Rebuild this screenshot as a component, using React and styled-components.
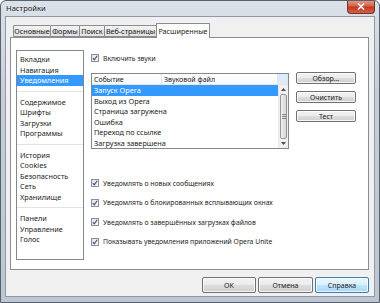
import React from 'react';
import styled, { createGlobalStyle } from 'styled-components';

const Global = createGlobalStyle`
  html, body { margin: 0; padding: 0; background: #fff; }
  body { font-family: "Noto Sans", "Open Sans", sans-serif; color: #1c1c1c; }
  * { box-sizing: border-box; }
`;

const Window = styled.div`
  width: 380px;
  height: 303px;
  display: flex;
  flex-direction: column;
  background: linear-gradient(180deg, #dbe1e8 0%, #c6cfd9 30%, #bcc6d0 100%);
  border: 1px solid #58626e;
  border-radius: 6px 6px 0 0;
  padding: 0 4px 5px 4px;
  overflow: hidden;
`;

const TitleBar = styled.div`
  height: 15px;
  display: flex;
  justify-content: space-between;
  align-items: flex-start;
`;

const Title = styled.div`
  font-size: 7.6px;
  line-height: 15px;
  padding-left: 1px;
  color: #1a1a1a;
  text-shadow: 0 0 4px rgba(255, 255, 255, 0.9);
`;

const CloseBtn = styled.div`
  width: 28px;
  height: 14px;
  margin-top: -1px;
  border: 1px solid #71342a;
  border-top: none;
  border-radius: 0 0 4px 4px;
  background: linear-gradient(180deg, #e9a190 0%, #d5634b 45%, #c5391f 55%, #d2604a 100%);
  display: flex;
  align-items: center;
  justify-content: center;
`;

const Client = styled.div`
  flex: 1;
  display: flex;
  flex-direction: column;
  background: #f0f0f0;
  border: 1px solid #8e99a5;
  padding: 6px 5px 3px 4px;
`;

const TabRow = styled.div`
  height: 14px;
  display: flex;
  align-items: flex-end;
  padding-left: 3px;
  position: relative;
  z-index: 1;
`;

const Tab = styled.div`
  width: ${p => p.$w}px;
  height: ${p => (p.$active ? 15 : 12)}px;
  margin-bottom: ${p => (p.$active ? -1 : 0)}px;
  margin-left: ${p => (p.$first ? 0 : -1)}px;
  border: 1px solid #898c95;
  border-bottom: ${p => (p.$active ? 'none' : '1px solid #898c95')};
  border-radius: 1px 1px 0 0;
  background: ${p => (p.$active ? '#ffffff' : 'linear-gradient(180deg, #f3f3f3 0%, #ebebeb 50%, #dedede 51%, #e6e6e6 100%)')};
  font-size: 7.2px;
  line-height: 10px;
  padding-top: ${p => (p.$active ? 2 : 0)}px;
  text-align: center;
  white-space: nowrap;
  position: relative;
  z-index: ${p => (p.$active ? 2 : 0)};
`;

const Panel = styled.div`
  flex: 1;
  background: #fff;
  border: 1px solid #898c95;
  display: flex;
  padding: 12px 0 0 5px;
`;

const Sidebar = styled.div`
  width: 68px;
  height: 210px;
  border: 1px solid #828790;
  background: #fff;
  padding-top: 3px;
  display: flex;
  flex-direction: column;
`;

const SideItem = styled.div`
  height: 10.5px;
  line-height: 10.5px;
  font-size: 7.3px;
  padding-left: 3px;
  white-space: nowrap;
  background: ${p => (p.$sel ? '#3399ff' : 'transparent')};
  color: ${p => (p.$sel ? '#fff' : '#1c1c1c')};
`;

const SideSep = styled.div`
  height: 11px;
  display: flex;
  align-items: center;
  &::after {
    content: '';
    flex: 1;
    height: 1px;
    background: #e3e3e3;
  }
`;

const Content = styled.div`
  margin-left: 7px;
  display: flex;
  flex-direction: column;
`;

const CheckRow = styled.div`
  height: 10px;
  display: flex;
  align-items: center;
  font-size: 6.8px;
  white-space: nowrap;
  margin-top: ${p => p.$mt || 0}px;
`;

const Box = styled.span`
  width: 8px;
  height: 8px;
  border: 1px solid #8f8f8f;
  background: linear-gradient(135deg, #e0e3ea 0%, #f6f7f9 100%);
  margin-right: 4px;
  display: flex;
  align-items: center;
  justify-content: center;
  flex: none;
`;

const SoundArea = styled.div`
  margin-top: 10px;
  display: flex;
  align-items: flex-start;
`;

const Table = styled.div`
  width: 198px;
  height: 76px;
  border: 1px solid #828790;
  display: flex;
  flex-direction: column;
  background: #fff;
`;

const Header = styled.div`
  height: 11px;
  display: flex;
  font-size: 7px;
  line-height: 11px;
  border-bottom: 1px solid #e5e5e5;
`;

const HeadCell = styled.div`
  width: ${p => (p.$w ? `${p.$w}px` : 'auto')};
  flex: ${p => (p.$w ? 'none' : 1)};
  padding-left: 2px;
  border-right: 1px solid #e5e5e5;
  white-space: nowrap;
  background: ${p => (p.$blue ? '#dcebf8' : 'linear-gradient(180deg, #fff 0%, #f7f8fa 100%)')};
`;

const TableBody = styled.div`
  flex: 1;
  display: flex;
`;

const Rows = styled.div`
  flex: 1;
  display: flex;
  flex-direction: column;
`;

const Row = styled.div`
  height: 10.5px;
  line-height: 10.5px;
  font-size: 7.3px;
  padding-left: 2px;
  white-space: nowrap;
  background: ${p => (p.$sel ? '#3399ff' : 'transparent')};
  color: ${p => (p.$sel ? '#fff' : '#1c1c1c')};
`;

const ScrollBar = styled.div`
  width: 10px;
  display: flex;
  flex-direction: column;
  background: #f0f0f0;
  border-left: 1px solid #e8e8e8;
`;

const ScrollArrow = styled.div`
  height: 9px;
  display: flex;
  align-items: center;
  justify-content: center;
`;

const Thumb = styled.div`
  flex: 1;
  margin: 0 1px;
  border: 1px solid #979797;
  border-radius: 2px;
  background: linear-gradient(90deg, #f2f2f2 0%, #e2e2e2 50%, #d6d6d6 100%);
  display: flex;
  align-items: center;
  justify-content: center;
`;

const SideButtons = styled.div`
  margin-left: 7px;
  margin-top: -1px;
  display: flex;
  flex-direction: column;
  gap: 7px;
`;

const Button = styled.div`
  width: ${p => p.$w}px;
  height: ${p => p.$h}px;
  border: 1px solid ${p => (p.$def ? '#3c7fb1' : '#707070')};
  border-radius: 2px;
  background: ${p => (p.$def
    ? 'linear-gradient(180deg, #eaf6fd 0%, #d9f0fc 50%, #bee6fd 51%, #a7d9f5 100%)'
    : 'linear-gradient(180deg, #f2f2f2 0%, #ebebeb 50%, #dddddd 51%, #cfcfcf 100%)')};
  box-shadow: inset 0 0 0 1px rgba(255, 255, 255, 0.75);
  font-size: 7px;
  display: flex;
  align-items: center;
  justify-content: center;
  white-space: nowrap;
`;

const NotifyList = styled.div`
  margin-top: 29px;
  display: flex;
  flex-direction: column;
  gap: 9.5px;
`;

const BottomBar = styled.div`
  margin-top: 7px;
  display: flex;
  justify-content: flex-end;
  gap: 2px;
`;

const Check = () => (
  <svg width="6" height="6" viewBox="0 0 6 6">
    <path d="M0.8 3.2 L2.3 4.8 L5.2 0.8" fill="none" stroke="#3a4f7a" strokeWidth="1.1" />
  </svg>
);

const CheckItem = ({ children, mt }) => (
  <CheckRow $mt={mt}>
    <Box><Check /></Box>
    {children}
  </CheckRow>
);

const sideGroups = [
  ['Вкладки', 'Навигация', 'Уведомления'],
  ['Содержимое', 'Шрифты', 'Загрузки', 'Программы'],
  ['История', 'Cookies', 'Безопасность', 'Сеть', 'Хранилище'],
  ['Панели', 'Управление', 'Голос'],
];

const tabs = [
  ['Основные', 38],
  ['Формы', 30],
  ['Поиск', 26],
  ['Веб-страницы', 53],
  ['Расширенные', 54],
];

const events = [
  'Запуск Opera',
  'Выход из Opera',
  'Страница загружена',
  'Ошибка',
  'Переход по ссылке',
  'Загрузка завершена',
];

export default function App() {
  return (
    <>
      <Global />
      <Window>
        <TitleBar>
          <Title>Настройки</Title>
          <CloseBtn>
            <svg width="8" height="7" viewBox="0 0 8 7">
              <path d="M1 0.5 L7 6.5 M7 0.5 L1 6.5" stroke="#fff" strokeWidth="1.6" />
            </svg>
          </CloseBtn>
        </TitleBar>
        <Client>
          <TabRow>
            {tabs.map(([t, w], i) => (
              <Tab key={t} $w={w} $first={i === 0} $active={i === 4}>{t}</Tab>
            ))}
          </TabRow>
          <Panel>
            <Sidebar>
              {sideGroups.map((g, gi) => (
                <React.Fragment key={gi}>
                  {gi > 0 && <SideSep />}
                  {g.map(item => (
                    <SideItem key={item} $sel={item === 'Уведомления'}>{item}</SideItem>
                  ))}
                </React.Fragment>
              ))}
            </Sidebar>
            <Content>
              <CheckItem mt={3}>Включить звуки</CheckItem>
              <SoundArea>
                <Table>
                  <Header>
                    <HeadCell $w={70}>Событие</HeadCell>
                    <HeadCell>Звуковой файл</HeadCell>
                    <HeadCell $w={10} $blue />
                  </Header>
                  <TableBody>
                    <Rows>
                      {events.map((e, i) => (
                        <Row key={e} $sel={i === 0}>{e}</Row>
                      ))}
                    </Rows>
                    <ScrollBar>
                      <ScrollArrow>
                        <svg width="5" height="3" viewBox="0 0 5 3"><path d="M0 3 L2.5 0 L5 3 Z" fill="#4d4d4d" /></svg>
                      </ScrollArrow>
                      <Thumb>
                        <svg width="4" height="5" viewBox="0 0 4 5">
                          <path d="M0 0.5 H4 M0 2.5 H4 M0 4.5 H4" stroke="#6b6b6b" strokeWidth="0.8" />
                        </svg>
                      </Thumb>
                      <ScrollArrow>
                        <svg width="5" height="3" viewBox="0 0 5 3"><path d="M0 0 L2.5 3 L5 0 Z" fill="#4d4d4d" /></svg>
                      </ScrollArrow>
                    </ScrollBar>
                  </TableBody>
                </Table>
                <SideButtons>
                  <Button $w={60} $h={12}>Обзор...</Button>
                  <Button $w={60} $h={12}>Очистить</Button>
                  <Button $w={60} $h={12}>Тест</Button>
                </SideButtons>
              </SoundArea>
              <NotifyList>
                <CheckItem>Уведомлять о новых сообщениях</CheckItem>
                <CheckItem>Уведомлять о блокированных всплывающих окнах</CheckItem>
                <CheckItem>Уведомлять о завершённых загрузках файлов</CheckItem>
                <CheckItem>Показывать уведомления приложений Opera Unite</CheckItem>
              </NotifyList>
            </Content>
          </Panel>
          <BottomBar>
            <Button $w={54} $h={16}>OK</Button>
            <Button $w={55} $h={16}>Отмена</Button>
            <Button $w={54} $h={16} $def>Справка</Button>
          </BottomBar>
        </Client>
      </Window>
    </>
  );
}
